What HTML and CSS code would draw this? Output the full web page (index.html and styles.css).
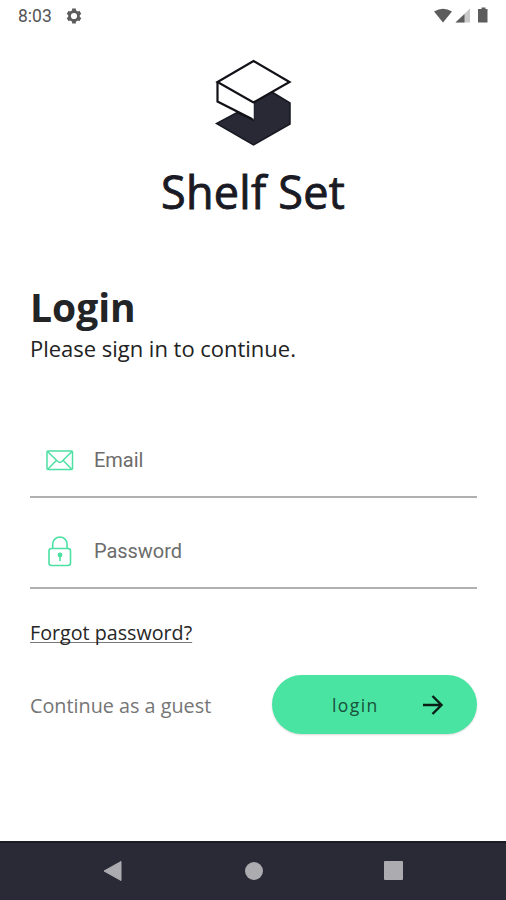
FILE: index.html
```html
<!DOCTYPE html>
<html lang="en">
<head>
<meta charset="utf-8">
<title>Shelf Set</title>
<link rel="stylesheet" href="styles.css">
</head>
<body>
<div class="screen">
  <header class="status">
    <span class="clock">8:03</span>
    <svg class="gear" width="16" height="16" viewBox="0 0 16 16"><circle cx="8" cy="8" r="4.500" fill="none" stroke="#5c5c5c" stroke-width="2.800"/><path d="M8 .6v3M8 12.4v3M1.6 4.3l2.6 1.5M11.8 10.2l2.6 1.5M1.6 11.7l2.6-1.5M11.8 5.8l2.6-1.5" stroke="#5c5c5c" stroke-width="3.800"/></svg>
    <svg class="signals" width="58" height="18" viewBox="0 0 58 18"><path d="M1 4.500Q10 -1 19 4.500L10 15.500Z" fill="#5c5c5c"/><path d="M37 1.500V15.500H22.500Z" fill="#c9c9c9"/><path d="M31.500 7V15.500H22.500Z" fill="#5c5c5c"/><path d="M48.500 .5h4v1.500h2v13.500h-9.500V2h3.500z" fill="#5c5c5c"/></svg>
  </header>
  <section class="brand">
    <svg width="78" height="90" viewBox="0 0 78 90"><path d="M57 33.500L76 45V66L39.500 87L2.500 65.500L23 54.500L39.500 62V41Z" fill="#282934" stroke="#171821" stroke-width="1.500"/><path d="M39.500 43.500V61.500L3.500 43V23.500Z" fill="#fff"/><path d="M39 61.500L3.500 43.500V24" fill="none" stroke="#111117" stroke-width="2.200"/><path d="M39.500 3L75.500 24L39.500 44.500L3.500 24Z" fill="#fff" stroke="#111117" stroke-width="2.200"/><path d="M39 45.500V60.500" stroke="#fff" stroke-width="1"/></svg>
    <h1>Shelf Set</h1>
  </section>
  <main>
    <h2>Login</h2>
    <p class="lead">Please sign in to continue.</p>
    <label class="field email">
      <svg width="28" height="32" viewBox="0 0 28 32"><g fill="none" stroke="#4de0a3" stroke-width="1.500"><rect x="1" y="7" width="25.500" height="18.500" rx="1"/><path d="M1.500 7.500L11.800 17.500Q13.800 19.200 15.800 17.500L26 7.500M2 25L10.500 16.300M25.500 25L17 16.300"/></g></svg>
      <span>Email</span>
    </label>
    <label class="field password">
      <svg width="28" height="32" viewBox="0 0 28 32"><g fill="none" stroke="#4de0a3" stroke-width="1.600"><rect x="3" y="13.500" width="21.500" height="17" rx="2.500"/><path d="M6.700 13.500V9.200A7.200 7.200 0 0 1 21.100 9.200V13.500M14 20v6"/></g><circle cx="14" cy="20" r="2.400" fill="#4de0a3"/></svg>
      <span>Password</span>
    </label>
    <a class="forgot">Forgot password?</a>
    <div class="actions">
      <span class="guest">Continue as a guest</span>
      <button><span>login</span><svg width="22" height="22" viewBox="0 0 22 22"><path d="M1 11H19M10.500 2L19.500 11L10.500 20" fill="none" stroke="#0b1d17" stroke-width="2.400"/></svg></button>
    </div>
  </main>
  <nav>
    <svg width="20" height="22" viewBox="0 0 20 22"><path d="M1 11L18 1.500V20.500Z" fill="#ababb0" stroke="#ababb0" stroke-linejoin="round"/></svg>
    <i class="home"></i>
    <i class="recent"></i>
  </nav>
</div>
</body>
</html>
```

FILE: styles.css
```css
* { box-sizing: border-box; }
body { margin: 0; background: #fff; font-family: "Open Sans", sans-serif; }
svg { display: block; flex: none; }
.screen { display: flex; flex-direction: column; width: 506px; height: 900px; overflow: hidden; }
.status { display: flex; align-items: center; height: 32px; padding: 0 15px 0 18px; }
.clock { width: 48px; font: 400 17.5px/32px Roboto, sans-serif; color: #555; }
.signals { margin-left: auto; }
.brand { display: flex; flex-direction: column; align-items: center; padding-top: 26px; }
.brand h1 { margin: 14px 0 0; font-size: 45px; font-weight: 400; line-height: 60px; letter-spacing: .25px; color: #191a24; -webkit-text-stroke: .9px #191a24; }
main { flex: 1; padding: 61px 29px 0 30px; }
h2 { margin: 0; font-size: 39px; font-weight: 700; line-height: 48px; color: #222426; }
.lead { margin: 2px 0 0; font-size: 22px; line-height: 30px; color: #222; letter-spacing: -.02px; }
.field { display: flex; align-items: center; height: 74px; padding-left: 16px; border-bottom: 2px solid #b0b0b0; font: 20px/30px Roboto, sans-serif; letter-spacing: -.05px; color: #6c6c6c; }
.field span { margin-left: 20px; }
.email { margin-top: 61px; }
.password { margin-top: 17px; }
.forgot { display: block; margin-top: 29px; width: max-content; font-size: 19.7px; line-height: 30px; color: #262626; text-decoration: underline; text-decoration-color: #777; text-decoration-thickness: 1px; text-underline-offset: 2px; text-decoration-skip-ink: none; }
.actions { display: flex; align-items: center; justify-content: space-between; margin-top: 27px; }
.guest { padding-top: 2px; font-size: 19.8px; line-height: 30px; color: #757575; }
button { display: flex; align-items: center; width: 205px; height: 59px; padding: 0 33px 0 60px; border: 0; border-radius: 30px; background: #49e4a2; box-shadow: 0 1px 2px rgba(0,0,0,.15); font: 17.5px/28px "Open Sans", sans-serif; letter-spacing: 1.4px; color: #175139; }
button svg { margin-left: auto; }
nav { display: flex; align-items: center; justify-content: space-between; height: 59px; padding: 0 103px; border-top: 2px solid #1b1c26; background: #292a35; }
nav > * { margin-bottom: 2px; }
.home { width: 18px; height: 18px; border-radius: 50%; background: #ababb0; }
.recent { width: 19px; height: 19px; border-radius: 1px; background: #ababb0; }
```
